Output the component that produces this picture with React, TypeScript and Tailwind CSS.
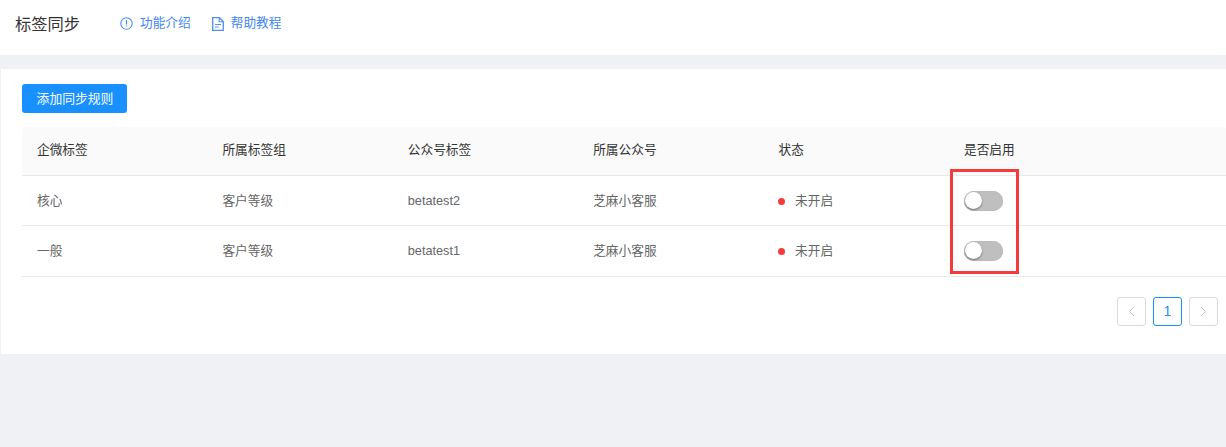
import { ReactNode } from 'react';

const FONT = "font-['Liberation_Sans','Noto_Sans_CJK_SC',sans-serif]";

const rows = [
    { tag: '核心', group: '客户等级', mpTag: 'betatest2', account: '芝麻小客服', status: '未开启', height: 'h-[50px]' },
    { tag: '一般', group: '客户等级', mpTag: 'betatest1', account: '芝麻小客服', status: '未开启', height: 'h-[51px]' },
];

function Cell({ children, className = '' }: { children?: ReactNode; className?: string }) {
    return <div className={`w-[185.4px] shrink-0 pl-[15px] ${className}`}>{children}</div>;
}

function Toggle() {
    return (
        <div className="h-[20px] w-[39px] rounded-full bg-[#bfbfbf] p-[1px] shadow-[inset_0_0_1px_#999]">
            <div className="h-[17px] w-[17px] rounded-full bg-white shadow-[0_1px_2px_rgba(0,0,0,0.45)]" />
        </div>
    );
}

function PageButton({ children, active }: { children: ReactNode; active?: boolean }) {
    return (
        <div
            className={`flex h-[29px] w-[29px] items-center justify-center rounded-[3px] border bg-white text-[14px] ${
                active ? 'border-[#1890ff] text-[#1890ff]' : 'border-[#d9d9d9] text-[#bfbfbf]'
            }`}
        >
            {children}
        </div>
    );
}

export default function App() {
    return (
        <div className={`h-[447px] w-[1226px] overflow-hidden bg-[#f0f1f5] ${FONT}`}>
            <header className="flex h-[55px] items-center bg-white pb-[7px] pl-[15px]">
                <h1 className="w-[65px] text-[16.3px] leading-[24px] whitespace-nowrap text-[#333]">标签同步</h1>
                <a className="ml-[40px] flex items-center text-[12.7px] text-[#3f86f5]">
                    <svg width="13" height="13" viewBox="0 0 13 13" fill="none" stroke="#4f8ff5" className="mr-[7px]">
                        <circle cx="6.5" cy="6.5" r="5.7" strokeWidth="1.1" />
                        <path d="M6.5 3.2v4.2M6.5 8.4v1.2" strokeWidth="1.3" />
                    </svg>
                    功能介绍
                </a>
                <a className="ml-[21px] flex items-center text-[12.7px] text-[#3f86f5]">
                    <svg width="12" height="14" viewBox="0 0 12 14" fill="none" stroke="#4f8ff5" className="mr-[7px]">
                        <path d="M.7.7h6.8l3.8 3.8v8.8H.7z" strokeWidth="1.3" />
                        <path d="M7.2.7v4h4M3 7.5h6M3 10h3.5" strokeWidth="1.1" />
                    </svg>
                    帮助教程
                </a>
            </header>

            <main className="ml-[1px] mt-[14px] h-[285px] bg-white pl-[21px] pt-[15px]">
                <button className="h-[29px] w-[105px] rounded-[3px] bg-[#1890ff] pl-[1px] text-[12.8px] text-white">添加同步规则</button>

                <section className="relative mt-[14px] text-[12.7px]">
                    <div className="flex h-[49px] items-center rounded-t-[3px] border-b border-[#e8e8e8] bg-[#fafafa] text-[#333]">
                        <Cell>企微标签</Cell>
                        <Cell>所属标签组</Cell>
                        <Cell>公众号标签</Cell>
                        <Cell>所属公众号</Cell>
                        <Cell>状态</Cell>
                        <Cell>是否启用</Cell>
                    </div>
                    {rows.map((row) => (
                        <div key={row.tag} className={`flex ${row.height} items-center border-b border-[#e8e8e8] pt-[2px] text-[#666]`}>
                            <Cell>{row.tag}</Cell>
                            <Cell>{row.group}</Cell>
                            <Cell>{row.mpTag}</Cell>
                            <Cell>{row.account}</Cell>
                            <Cell className="flex items-center">
                                <span className="mr-[10px] ml-[-0.5px] h-[7px] w-[7px] rounded-full bg-[#f83a3a]" />
                                {row.status}
                            </Cell>
                            <Cell className="-mt-[2px]">
                                <Toggle />
                            </Cell>
                        </div>
                    ))}
                    {/* red annotation over the toggles */}
                    <div className="absolute left-[928px] top-[42px] h-[105px] w-[69px] border-[3px] border-[#f33b3b]" />
                </section>

                <nav className="mt-[20px] flex justify-end gap-[7px] pr-[8px]">
                    <PageButton>
                        <svg width="7" height="11" viewBox="0 0 7 11" fill="none" stroke="#c4c4c4" strokeWidth="1">
                            <path d="M6 1 1.5 5.5 6 10" />
                        </svg>
                    </PageButton>
                    <PageButton active>1</PageButton>
                    <PageButton>
                        <svg width="7" height="11" viewBox="0 0 7 11" fill="none" stroke="#c4c4c4" strokeWidth="1">
                            <path d="M1 1l4.5 4.5L1 10" />
                        </svg>
                    </PageButton>
                </nav>
            </main>
        </div>
    );
}
